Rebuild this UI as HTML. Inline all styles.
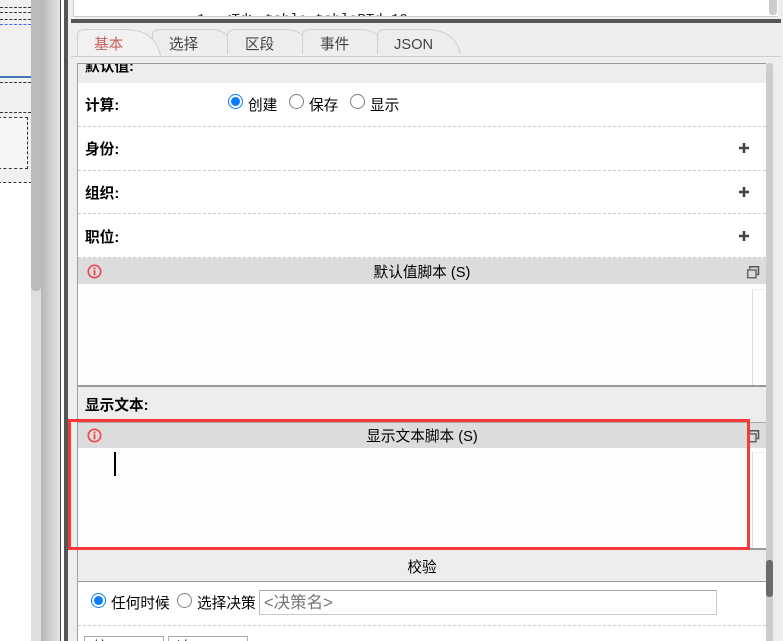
<!DOCTYPE html>
<html>
<head>
<meta charset="utf-8">
<style>
html,body{margin:0;padding:0;background:#eee;}
#p{position:relative;width:783px;height:641px;overflow:hidden;background:#eee;font-family:"Liberation Sans","Noto Sans CJK SC",sans-serif;font-size:14.67px;color:#000;}
#p div,#p span.a,#p svg{position:absolute;}
.t{white-space:nowrap;line-height:20px;}
.b{font-weight:bold;font-size:14.67px;}
.dh{height:0;border-top:1px dashed #ccc;left:78px;width:688px;}
.ld{left:0;width:31px;height:0;border-top:1px dashed #333;}
.hd{background:#dcdcdc;left:78px;width:688px;}
.tab{color:#444;font-size:14.67px;}
</style>
</head>
<body>
<div id="p">
  <!-- left pane -->
  <div style="left:0;top:0;width:31px;height:182px;background:#f0f0f0"></div>
  <div style="left:0;top:182px;width:31px;height:459px;background:#fff"></div>
  <div class="ld" style="top:7px"></div>
  <div class="ld" style="top:12px"></div>
  <div class="ld" style="top:19px"></div>
  <div class="ld" style="top:24px;border-top-color:#46f"></div>
  <div style="left:0;top:76px;width:31px;height:2px;background:#4577b5"></div>
  <div class="ld" style="top:82px"></div>
  <div class="ld" style="top:112px"></div>
  <div style="left:-2px;top:117px;width:28px;height:50px;border:1px dashed #333;background:#f6f6f6"></div>
  <div style="left:-2px;top:182px;width:32px;height:470px;border:1px dashed #333;border-bottom:0;background:#fff"></div>
  <!-- left scrollbar + splitter -->
  <div style="left:31px;top:0;width:10px;height:641px;background:#dedede"></div>
  <div style="left:31px;top:0;width:10px;height:291px;background:#bbb;border-radius:0 0 4px 4px"></div>
  <div style="left:41px;top:0;width:19px;height:641px;background:linear-gradient(90deg,#b5b5b5,#e6e6e6)"></div>
  <div style="left:60px;top:0;width:1px;height:641px;background:#444"></div>
  <div style="left:61px;top:0;width:3px;height:641px;background:#fff"></div>
  <div style="left:64px;top:0;width:4px;height:641px;background:#555"></div>

  <!-- top editor -->
  <div style="left:73px;top:0;width:704px;height:16px;background:#fff;border-bottom:1px solid #ccc;border-left:1px solid #ccc;overflow:hidden">
    <div class="t" style="left:123px;top:10px;color:#333;font-size:14px;font-family:'Liberation Mono',monospace">1</div>
    <div class="t" style="left:149px;top:10px;color:#222;font-size:14px;font-family:'Liberation Mono',monospace">&lt;Td&gt; table tableRTd 10</div>
  </div>
  <div style="left:769px;top:0;width:8px;height:15px;background:#ccc;border-radius:0 0 3px 3px"></div>
  <div style="left:71px;top:19px;width:710px;height:4px;background:#555"></div>

  <!-- tabs -->
  <svg style="left:70px;top:25px" width="400" height="35" viewBox="70 25 400 35">
    <g fill="#ededed" stroke="#d0d0d0" stroke-width="1">
      <path d="M377.5 54V36Q377.5 29.5 385 29.5H425Q455 29.5 460.5 54"/>
      <path d="M302.5 54V36Q302.5 29.5 310 29.5H360Q372 29.5 378 36"/>
      <path d="M227.5 54V36Q227.5 29.5 235 29.5H285Q297 29.5 303 36"/>
      <path d="M152.5 54V36Q152.5 29.5 160 29.5H210Q222 29.5 228 36"/>
      <path d="M77.5 56V36Q77.5 29.5 85 29.5H125Q155 29.5 160.5 56" fill="#f1f1f1"/>
    </g>
  </svg>
  <div style="left:71px;top:56px;width:710px;height:1px;background:#ccc"></div>
  <div class="t tab" style="left:94px;top:35px;color:#c9605f">基本</div>
  <div class="t tab" style="left:169px;top:35px">选择</div>
  <div class="t tab" style="left:245px;top:35px">区段</div>
  <div class="t tab" style="left:320px;top:35px">事件</div>
  <div class="t tab" style="left:394px;top:35px">JSON</div>

  <!-- panel -->
  <div style="left:77px;top:63px;width:689px;height:578px;background:#fff;border-left:1px solid #a0a0a0;box-sizing:border-box"></div>
  <div style="left:78px;top:63px;width:688px;height:20px;background:#ededed;border-top:1px solid #999;box-sizing:border-box;overflow:hidden">
    <div class="t b" style="left:7px;top:-7px">默认值:</div>
  </div>
  <div class="t b" style="left:85px;top:96px">计算:</div>
  <div style="left:228px;top:94px;width:15px;height:15px;border:1.5px solid #0a7cff;border-radius:50%;box-sizing:border-box;background:#fff"></div>
  <div style="left:231px;top:97px;width:9px;height:9px;border-radius:50%;background:#0a7cff"></div>
  <div class="t" style="left:248px;top:96px">创建</div>
  <div style="left:289px;top:94px;width:15px;height:15px;border:1.5px solid #808080;border-radius:50%;box-sizing:border-box;background:#fff"></div>
  <div class="t" style="left:309px;top:96px">保存</div>
  <div style="left:350px;top:94px;width:15px;height:15px;border:1.5px solid #808080;border-radius:50%;box-sizing:border-box;background:#fff"></div>
  <div class="t" style="left:370px;top:96px">显示</div>
  <div class="dh" style="top:126px"></div>
  <div class="t b" style="left:85px;top:140px">身份:</div>
  <div class="dh" style="top:170px"></div>
  <div class="t b" style="left:85px;top:184px">组织:</div>
  <div class="dh" style="top:213px"></div>
  <div class="t b" style="left:85px;top:228px">职位:</div>
  <div class="dh" style="top:257px"></div>
  <svg style="left:738px;top:141px" width="12" height="100" viewBox="0 0 12 100"><g fill="#444">
    <path d="M1 5.7h10v2.6H1zM4.7 2h2.6v10H4.7z"/>
    <path d="M1 49.7h10v2.6H1zM4.7 46h2.6v10H4.7z"/>
    <path d="M1 93.7h10v2.6H1zM4.7 90h2.6v10H4.7z"/>
  </g></svg>

  <!-- header 1 -->
  <div class="hd" style="top:258px;height:26px"></div>
  <div class="t" style="left:78px;top:263px;width:688px;text-align:center">默认值脚本 (S)</div>
  <svg style="left:86px;top:263px" width="17" height="17" viewBox="0 0 17 17"><circle cx="8.5" cy="8.5" r="6.2" fill="none" stroke="#ef4a50" stroke-width="1.7"/><path d="M8.5 4.6v1.8M8.5 7.3v5" stroke="#ef4a50" stroke-width="1.9" fill="none"/></svg>
  <svg style="left:746px;top:265px" width="14" height="14" viewBox="0 0 14 14"><path d="M3.8 3.8V1.8H12.5V9.5H10.8" fill="none" stroke="#555" stroke-width="1.5"/><path d="M1.7 5H10V12.8H1.7z" fill="none" stroke="#666" stroke-width="1.5"/></svg>
  <div style="left:78px;top:284px;width:688px;height:101px;background:#fefefc"></div>
  <div style="left:752px;top:289px;width:14px;height:96px;background:#fff;border-left:1px solid #ddd;border-top:1px solid #eee;box-sizing:border-box"></div>
  <div style="left:78px;top:385px;width:688px;height:2px;background:#999"></div>

  <div style="left:78px;top:387px;width:688px;height:35px;background:#ededed"></div>
  <div class="t b" style="left:85px;top:396px">显示文本:</div>

  <!-- header 2 -->
  <div class="hd" style="top:422px;height:26px;border-top:1px solid #aaa;box-sizing:border-box"></div>
  <div class="t" style="left:78px;top:427px;width:688px;text-align:center">显示文本脚本 (S)</div>
  <svg style="left:86px;top:427px" width="17" height="17" viewBox="0 0 17 17"><circle cx="8.5" cy="8.5" r="6.2" fill="none" stroke="#ef4a50" stroke-width="1.7"/><path d="M8.5 4.6v1.8M8.5 7.3v5" stroke="#ef4a50" stroke-width="1.9" fill="none"/></svg>
  <svg style="left:746px;top:429px" width="14" height="14" viewBox="0 0 14 14"><path d="M3.8 3.8V1.8H12.5V9.5H10.8" fill="none" stroke="#555" stroke-width="1.5"/><path d="M1.7 5H10V12.8H1.7z" fill="none" stroke="#666" stroke-width="1.5"/></svg>
  <div style="left:78px;top:448px;width:688px;height:100px;background:#fefefc"></div>
  <div style="left:752px;top:452px;width:14px;height:96px;background:#fff;border-left:1px solid #ddd;border-top:1px solid #eee;box-sizing:border-box"></div>
  <div style="left:114px;top:452px;width:2px;height:24px;background:#000"></div>
  <div style="left:78px;top:548px;width:688px;height:2px;background:#999"></div>

  <!-- validation -->
  <div style="left:78px;top:550px;width:688px;height:31px;background:#ededed"></div>
  <div class="t" style="left:78px;top:558px;width:688px;text-align:center">校验</div>
  <div style="left:78px;top:581px;width:688px;height:1px;background:#999"></div>
  <div style="left:91px;top:593px;width:15px;height:15px;border:1.5px solid #0a7cff;border-radius:50%;box-sizing:border-box;background:#fff"></div>
  <div style="left:94px;top:596px;width:9px;height:9px;border-radius:50%;background:#0a7cff"></div>
  <div class="t" style="left:111px;top:594px">任何时候</div>
  <div style="left:177px;top:593px;width:15px;height:15px;border:1.5px solid #808080;border-radius:50%;box-sizing:border-box;background:#fff"></div>
  <div class="t" style="left:197px;top:594px">选择决策</div>
  <div style="left:259px;top:590px;width:458px;height:25px;box-sizing:border-box;border:1px solid #c8c8c8;border-top-color:#a5a5a5;border-left-color:#bbb;background:#fff"></div>
  <div class="t" style="left:264px;top:593px;color:#757575;font-size:16.5px">&lt;决策名&gt;</div>
  <div class="dh" style="top:625px"></div>
  <div style="left:84px;top:636px;width:80px;height:20px;box-sizing:border-box;border:1px solid #aaa;background:#fff;overflow:hidden"><div class="t" style="left:8px;top:1px;color:#333">校</div></div>
  <div style="left:168px;top:636px;width:80px;height:20px;box-sizing:border-box;border:1px solid #aaa;background:#fff;overflow:hidden"><div class="t" style="left:8px;top:1px;color:#333">决</div></div>

  <!-- right scrollbar -->
  <div style="left:766px;top:63px;width:7px;height:578px;background:#ccc;border-radius:3px 3px 0 0"></div>
  <div style="left:766px;top:560px;width:7px;height:37px;background:#6a6a6a;border-radius:3px"></div>

  <!-- red box -->
  <div style="left:68px;top:419px;width:682px;height:131px;box-sizing:border-box;border:3px solid #f63a3a"></div>
</div>
</body>
</html>
